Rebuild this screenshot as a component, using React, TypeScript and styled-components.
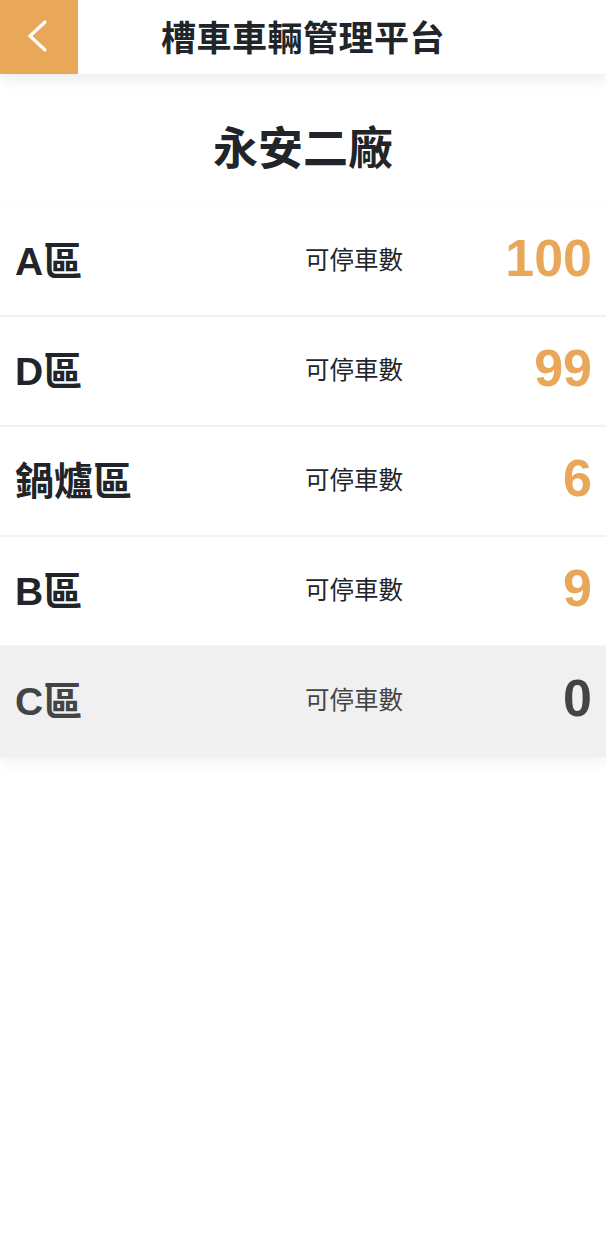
import React from "react";
import styled, { createGlobalStyle } from "styled-components";

const GlobalStyle = createGlobalStyle`
  html, body { margin: 0; padding: 0; background: #ffffff; }
  body { font-family: "Liberation Sans", "Noto Sans CJK TC", Arial, sans-serif; color: #212529; }
  * { box-sizing: border-box; }
`;

const Page = styled.div`
  width: 606px;
  min-height: 1252px;
  background: #fff;
`;

const Header = styled.header`
  position: relative;
  z-index: 2;
  height: 74px;
  display: grid;
  grid-template-columns: 78px 1fr 78px;
  align-items: center;
  background: #fff;
  box-shadow: 0 6px 14px rgba(0, 0, 0, 0.08);
`;

const BackButton = styled.button`
  width: 78px;
  height: 74px;
  border: none;
  padding: 0 0 2px 0;
  background: #e9a75a;
  display: flex;
  align-items: center;
  justify-content: center;
  cursor: pointer;
`;

const HeaderTitle = styled.h1`
  margin: 0;
  padding-bottom: 3px;
  text-align: center;
  font-size: 35px;
  font-weight: 700;
  letter-spacing: 0.5px;
  color: #212529;
  font-family: "Noto Sans CJK TC", sans-serif;
`;

const Factory = styled.h2`
  margin: 0;
  height: 133px;
  display: flex;
  align-items: center;
  justify-content: center;
  padding-top: 10px;
  font-size: 45px;
  font-weight: 700;
  color: #212529;
  font-family: "Noto Sans CJK TC", sans-serif;
`;

const List = styled.div`
  background: #fff;
  box-shadow: 0 4px 14px rgba(0, 0, 0, 0.07);
`;

const Row = styled.div<{ $disabled?: boolean }>`
  height: 110px;
  display: grid;
  grid-template-columns: 305px auto 1fr;
  align-items: center;
  padding: 0 14px 6px 15px;
  border-bottom: 2px solid ${(p) => (p.$disabled ? "transparent" : "#f2f2f2")};
  background: ${(p) => (p.$disabled ? "#f0f0f0" : "#fff")};
  color: ${(p) => (p.$disabled ? "#444444" : "#212529")};
`;

const Zone = styled.div`
  font-size: 39px;
  font-weight: 700;
  font-family: "Liberation Sans", "Noto Sans CJK TC", sans-serif;
`;

const Label = styled.div`
  margin-left: -15px;
  font-size: 24.5px;
  font-weight: 400;
  font-family: "Noto Sans CJK TC", sans-serif;
`;

const Count = styled.div<{ $disabled?: boolean }>`
  text-align: right;
  font-size: 52px;
  font-weight: 700;
  font-family: "Liberation Sans", Arial, sans-serif;
  color: ${(p) => (p.$disabled ? "#444444" : "#e9a75a")};
`;

const zones = [
  { name: "A區", count: 100 },
  { name: "D區", count: 99 },
  { name: "鍋爐區", count: 6 },
  { name: "B區", count: 9 },
  { name: "C區", count: 0 },
];

export default function App() {
  return (
    <Page>
      <GlobalStyle />
      <Header>
        <BackButton aria-label="back">
          <svg width="24" height="34" viewBox="0 0 24 34">
            <polyline
              points="18,3 3,17 18,31"
              fill="none"
              stroke="#fff"
              strokeWidth="3.2"
              strokeLinecap="round"
              strokeLinejoin="miter"
            />
          </svg>
        </BackButton>
        <HeaderTitle>槽車車輛管理平台</HeaderTitle>
        <div />
      </Header>
      <Factory>永安二廠</Factory>
      <List>
        {zones.map((z) => {
          const disabled = z.count === 0;
          return (
            <Row key={z.name} $disabled={disabled}>
              <Zone>{z.name}</Zone>
              <Label>可停車數</Label>
              <Count $disabled={disabled}>{z.count}</Count>
            </Row>
          );
        })}
      </List>
    </Page>
  );
}
